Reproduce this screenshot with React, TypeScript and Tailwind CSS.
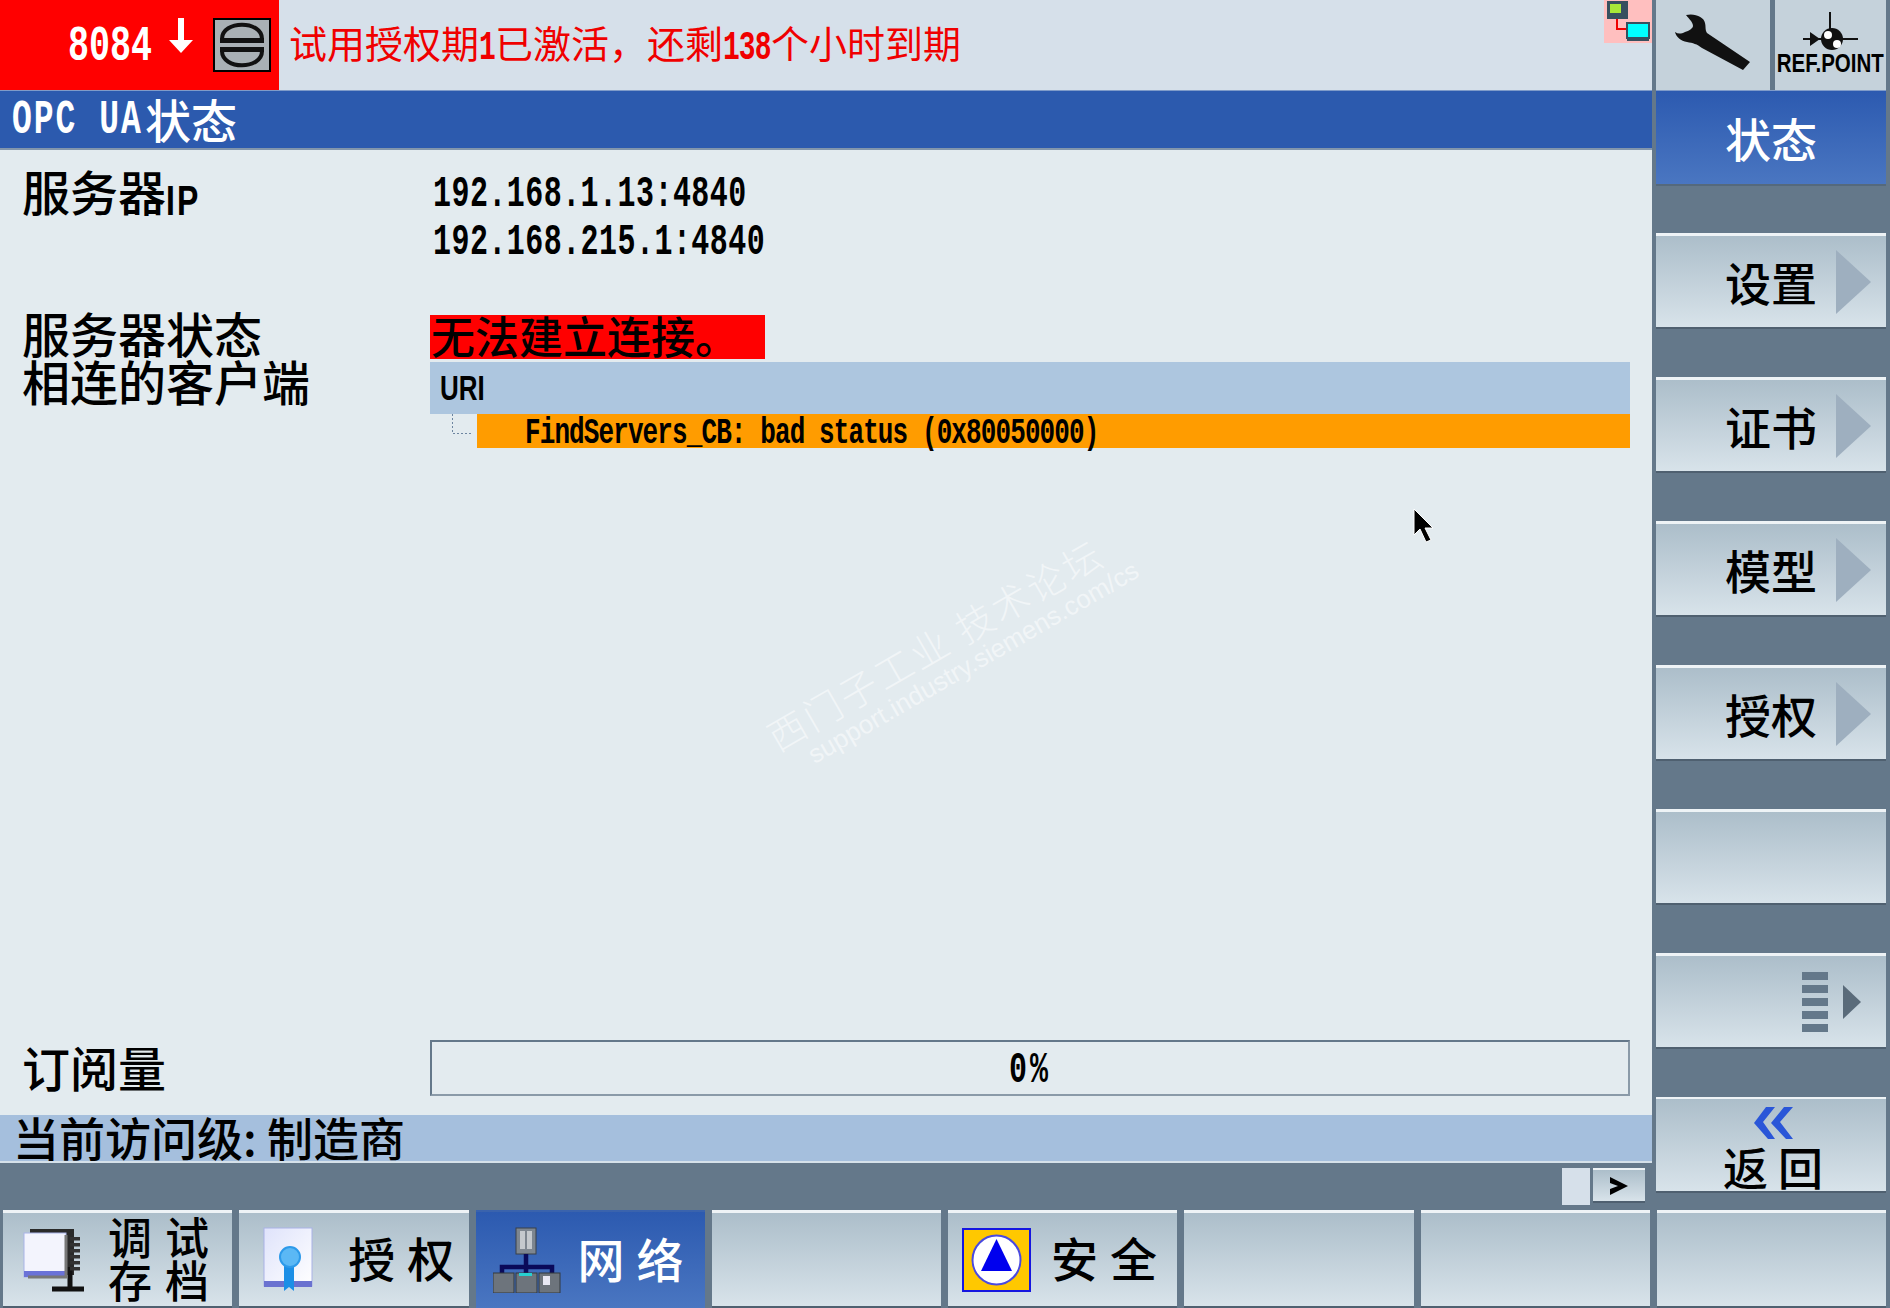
const cjk = "font-['Noto_Sans_CJK_SC','Liberation_Sans',sans-serif]";

// tall narrow digits of the HMI font
function Mono({ children, className = "" }: { children: React.ReactNode; className?: string }) {
	return (
		<span className={`inline-block origin-center scale-y-[1.45] font-['Liberation_Mono',monospace] font-bold ${className}`}>
			{children}
		</span>
	);
}

function Narrow({ children, className = "" }: { children: React.ReactNode; className?: string }) {
	return (
		<span className={`inline-block origin-center scale-y-[1.35] font-['Liberation_Sans',sans-serif] font-bold ${className}`}>
			{children}
		</span>
	);
}

function SideButton({ label, arrow = true }: { label?: string; arrow?: boolean }) {
	return (
		<div className="flex h-[96px] w-[230px] items-center border-t-[3px] border-b-[2px] border-t-[#eef3f6] border-b-[#4f6070] bg-gradient-to-b from-[#acbeca] to-[#d8e3ea] pl-[69px]">
			<span className={`${cjk} mb-[2px] w-[111px] text-[46px] leading-none font-medium whitespace-nowrap text-black`}>{label}</span>
			{arrow && (
				<svg width="36" height="64" viewBox="0 0 36 64">
					<path d="M0 0 L35 32 L0 64 Z" fill="#9eafbf" />
				</svg>
			)}
		</div>
	);
}

function NavButton({ active, children }: { active?: boolean; children?: React.ReactNode }) {
	return (
		<div
			className={
				active
					? "flex h-[98px] items-center border-t-[2px] border-[#3a63ad] bg-gradient-to-b from-[#2c5ab0] to-[#4a76c1]"
					: "flex h-[98px] items-center border-t-[3px] border-b-[2px] border-t-[#eef3f6] border-b-[#4f6070] bg-gradient-to-b from-[#acbeca] to-[#d8e3ea]"
			}
		>
			{children}
		</div>
	);
}

function NotebookIcon() {
	return (
		<svg width="62" height="66" viewBox="0 0 62 66" className="ml-[19px] shrink-0">
			<path d="M8 2 H52 V48 H8 Z" fill="#2a2a2a" />
			<path d="M30 62 H64 M48 40 V62" stroke="#111" strokeWidth="5" fill="none" />
			{[10, 16, 22, 28, 34, 40].map((y) => (
				<rect key={y} x="48" y={y} width="10" height="3.5" fill="#333" />
			))}
			<rect x="2" y="6" width="42" height="44" fill="#f3f4fd" stroke="#aab4e8" />
			<rect x="2" y="44" width="42" height="6" fill="#6a72d8" />
			<path d="M44 8 V50 H6" stroke="#777" strokeWidth="3" fill="none" />
		</svg>
	);
}

function CertIcon() {
	return (
		<svg width="52" height="66" viewBox="0 0 52 66" className="ml-[24px] shrink-0">
			<defs>
				<linearGradient id="paper" x1="0" y1="0" x2="1" y2="1">
					<stop offset="0" stopColor="#dfe3fb" />
					<stop offset="1" stopColor="#ffffff" />
				</linearGradient>
			</defs>
			<rect x="1" y="1" width="48" height="58" fill="url(#paper)" stroke="#a9b2e6" />
			<rect x="1" y="54" width="48" height="6" fill="#6a72d0" />
			<path d="M21 36 H31 V64 L26 60 L21 64 Z" fill="#1c8fe6" />
			<circle cx="27" cy="30" r="10" fill="#5bb8f5" stroke="#2d9aea" strokeWidth="2" />
		</svg>
	);
}

function NetworkIcon() {
	return (
		<svg width="68" height="66" viewBox="0 0 68 66" className="ml-[17px] shrink-0">
			<rect x="23" y="1" width="20" height="26" fill="#7d8690" stroke="#3a4048" />
			<rect x="27" y="4" width="5" height="18" fill="#c4c9ce" />
			<rect x="34" y="4" width="5" height="18" fill="#c4c9ce" />
			<path d="M33 27 V40 M9 46 V40 H59 V46 M33 40 V46" stroke="#0a0a5a" strokeWidth="4.5" fill="none" />
			{[0, 23, 46].map((x) => (
				<rect key={x} x={x} y="46" width="21" height="20" fill="#6d747c" stroke="#33383e" />
			))}
			<rect x="26" y="46" width="13" height="3" fill="#28d0d0" />
			<rect x="50" y="49" width="7" height="9" fill="#e8e8f4" />
		</svg>
	);
}

function SafetyIcon() {
	return (
		<svg width="69" height="64" viewBox="0 0 69 64" className="ml-[14px] shrink-0">
			<rect x="1" y="1" width="67" height="62" fill="#ffc800" stroke="#1616e0" strokeWidth="2" />
			<ellipse cx="34.5" cy="32" rx="24" ry="24.5" fill="#fff" stroke="#4a4ae0" strokeWidth="2" />
			<path d="M34.5 11 L50 43 H19 Z" fill="#0000ee" />
		</svg>
	);
}

export default function App() {
	return (
		<div className={`flex h-[1308px] w-[1890px] flex-col overflow-hidden bg-[#64788a] ${cjk}`}>
			<div className="flex h-[1210px]">
				{/* left pane */}
				<div className="flex w-[1652px] flex-col">
					<div className="flex h-[90px] items-center bg-[#d6e0ea]">
						<div className="flex h-[90px] w-[279px] shrink-0 items-center bg-[#ff0000]">
							<Mono className="mt-[5px] ml-[68px] w-[84px] text-[35px] leading-none text-white">8084</Mono>
							<svg width="26" height="36" viewBox="0 0 26 36" className="mt-[-18px] ml-[16px]">
								<path d="M10 0 H16 V22 H25 L13 35 L1 22 H10 Z" fill="#fff" />
							</svg>
							<div className="ml-[19px] flex h-[54px] w-[58px] items-center justify-center border-[2px] border-black bg-[#a9b0b5]">
								<svg width="46" height="48" viewBox="0 0 46 48">
									<path d="M3 18 C3 -1 43 -1 43 18 M3 30 C3 49 43 49 43 30" fill="none" stroke="#111" strokeWidth="4" />
									<rect x="1" y="17" width="44" height="5" fill="#111" />
									<rect x="1" y="26" width="44" height="5" fill="#111" />
								</svg>
							</div>
						</div>
						<span className="mb-[2px] ml-[10px] w-[690px] text-[38px] leading-none whitespace-nowrap text-[#f00000]">
							试用授权期<Mono className="w-[16px] -translate-y-[2px] text-[28px] leading-none tracking-[-1px]">1</Mono>已激活，还剩<Mono className="w-[48px] -translate-y-[2px] text-[28px] leading-none tracking-[-1px]">138</Mono>个小时到期
						</span>
						<div className="mt-[-47px] ml-auto h-[43px] w-[48px]">
							<svg width="48" height="43" viewBox="0 0 48 43">
								<rect width="48" height="43" fill="#ffbfbf" />
								<rect x="3" y="1" width="21" height="18" fill="#37505f" />
								<rect x="6" y="4" width="11" height="9" fill="#a8e838" />
								<path d="M13 19 V29 H23" stroke="#f00000" strokeWidth="2" fill="none" />
								<rect x="23" y="23" width="22" height="15" fill="#00ffff" stroke="#37505f" strokeWidth="2" />
								<rect x="23" y="37" width="22" height="4" fill="#37505f" />
							</svg>
						</div>
					</div>
					<div className="flex h-[60px] items-center border-t border-b-[2px] border-t-[#7f9bc9] border-b-[#8296ac] bg-[#2c5aae] pb-[3px] pl-[12px] text-[46px] leading-none text-white">
						<Mono className="mt-[5px] w-[133px] text-[33px] leading-none tracking-[2px] whitespace-nowrap">OPC UA</Mono>
						<span className="font-medium">状态</span>
					</div>

					<div className="relative flex flex-1 flex-col bg-[#e3ebef] px-[22px] text-[48px] leading-none text-black">
						<div className="mt-[19px] flex h-[48px] items-center">
							<span className="mb-[4px] w-[408px] font-medium">服务器<Narrow className="w-[36px] text-[32px] tracking-[2px]">IP</Narrow></span>
							<Mono className="mt-[2px] ml-[3px] text-[30px] tracking-[0.45px]">192.168.1.13:4840</Mono>
						</div>
						<div className="flex h-[48px] items-center">
							<Mono className="mt-[2px] ml-[411px] text-[30px] tracking-[0.45px]">192.168.215.1:4840</Mono>
						</div>
						<div className="mt-[48px] flex h-[48px] items-center">
							<span className="mb-[10px] w-[408px] font-medium">服务器状态</span>
							<div className="flex h-[44px] w-[335px] items-center bg-[#ff0000] pb-[4px] pl-[1px] text-[44px] font-medium whitespace-nowrap">无法建立连接。</div>
						</div>
						<div className="flex items-start">
							<span className="-mt-[5px] w-[408px] font-medium">相连的客户端</span>
							<div className="mt-[1px] w-[1200px]">
								<div className="flex h-[52px] items-center bg-[#adc6df] pl-[10px]">
									<Narrow className="text-[26px]">URI</Narrow>
								</div>
								<div className="flex h-[34px]">
									<svg width="47" height="34" viewBox="0 0 47 34">
										<path d="M22.5 0 V19.5 H43" stroke="#6d85a0" strokeDasharray="2 2" fill="none" />
									</svg>
									<div className="flex flex-1 items-center bg-[#ff9c00] pt-[3px] pl-[48px]">
										<Mono className="text-[26px] tracking-[-0.9px] whitespace-nowrap">FindServers_CB: bad status (0x80050000)</Mono>
									</div>
								</div>
							</div>
						</div>

						<div className="mt-auto mb-[19px] flex h-[56px] items-center">
							<span className="mb-[5px] w-[408px] font-medium">订阅量</span>
							<div className="flex h-[56px] w-[1200px] items-center justify-center border-[2px] border-t-[#64788a] border-r-[#8a9aa8] border-b-[#8a9aa8] border-l-[#64788a] pt-[3px]">
								<Mono className="text-[30px] tracking-[3px]">0%</Mono>
							</div>
						</div>

						{/* forum watermark */}
						<div className="absolute top-[465px] left-[750px] flex rotate-[-30deg] flex-col items-center whitespace-nowrap text-white/50">
							<span className="mr-[24px] text-[38px] leading-[42px] font-light tracking-[3px]">西门子工业 技术论坛</span>
							<span className="ml-[24px] font-['Liberation_Sans',sans-serif] text-[26px] leading-[28px]">support.industry.siemens.com/cs</span>
						</div>

						{/* mouse pointer */}
						<svg width="24" height="36" viewBox="0 0 24 36" className="absolute top-[358px] left-[1413px]">
							<path d="M1 1 V27 L7 21 L13 34 L18 32 L12 20 H20 Z" fill="#000" stroke="#fff" strokeWidth="1" />
						</svg>
					</div>

					<div className="flex h-[48px] items-center border-b-[2px] border-b-[#d5e1ea] bg-[#a5bfdd] pb-[4px] pl-[13px] text-[46px] leading-none font-medium whitespace-nowrap text-black">
						当前访问级: 制造商
					</div>
					<div className="flex h-[47px] items-start justify-end pt-[5px] pr-[7px]">
						<div className="h-[37px] w-[28px] bg-[#d6e0ea]" />
						<div className="ml-[3px] flex h-[35px] w-[52px] items-center justify-center border-t-[2px] border-b-[2px] border-t-[#eef3f6] border-b-[#4f6070] bg-gradient-to-b from-[#acbeca] to-[#d8e3ea]">
							<svg width="22" height="20" viewBox="0 0 22 20">
								<path d="M2 1 L20 10 L2 19 V13 L10 10 L2 7 Z" fill="#000" />
							</svg>
						</div>
					</div>
				</div>

				{/* right soft keys */}
				<div className="ml-[4px] flex w-[230px] flex-col">
					<div className="flex h-[90px] gap-[5px] bg-[#64788a]">
						<div className="flex h-[90px] w-[114px] items-center justify-center bg-[#c5d2db]">
							<svg width="76" height="57" viewBox="0 0 76 57" className="mb-[6px]">
								<path d="M11 1 C20 -1 29 3 30 9 C31 13 30 16 32 19 L75 48 L68 56 L27 34 C22 30 18 29 12 28 C6 27 1 23 0 18 C3 20 6 20 10 18 C14 17 18 14 18 12 C18 8 14 5 11 1 Z" fill="#111" />
							</svg>
						</div>
						<div className="flex h-[90px] w-[112px] flex-col items-center bg-[#c5d2db]">
							<svg width="60" height="42" viewBox="0 0 60 42" className="mt-[12px]">
								<path d="M30 0 V26 M3 27 H58" stroke="#111" strokeWidth="2" />
								<path d="M10 20 L20 27 L10 34 Z" fill="#111" />
								<circle cx="32" cy="27" r="11" fill="#111" />
								<circle cx="28" cy="23" r="4" fill="#fff" />
								<circle cx="37" cy="32" r="4" fill="#fff" />
							</svg>
							<span className="mt-[-1px] scale-y-[1.25] font-['Liberation_Sans',sans-serif] text-[20.5px] leading-none font-bold whitespace-nowrap text-black">REF.POINT</span>
						</div>
					</div>
					<div className="flex h-[96px] items-center border-t border-b-[2px] border-t-[#7f9bc9] border-b-[#55697c] bg-gradient-to-b from-[#2c5ab0] to-[#4a76c1] pb-[2px] pl-[69px] text-[46px] leading-none font-medium text-white">
						状态
					</div>
					<div className="mt-[47px] flex flex-col gap-[48px]">
						<SideButton label="设置" />
						<SideButton label="证书" />
						<SideButton label="模型" />
						<SideButton label="授权" />
						<SideButton arrow={false} />
						<div className="flex h-[96px] items-center justify-end border-t-[3px] border-b-[2px] border-t-[#eef3f6] border-b-[#4f6070] bg-gradient-to-b from-[#acbeca] to-[#d8e3ea] pr-[25px]">
							<svg width="26" height="60" viewBox="0 0 26 60">
								{[0, 13, 26, 39, 52].map((y) => (
									<rect key={y} x="0" y={y} width="26" height="8" fill="#64788a" />
								))}
							</svg>
							<svg width="18" height="34" viewBox="0 0 18 34" className="ml-[15px]">
								<path d="M0 0 L18 17 L0 34 Z" fill="#5a6b7a" />
							</svg>
						</div>
						<div className="flex h-[96px] flex-col items-center border-t-[2px] border-b-[2px] border-t-[#eef3f6] border-b-[#4f6070] bg-gradient-to-b from-[#acbeca] to-[#d8e3ea]">
							<svg width="40" height="32" viewBox="0 0 40 32" className="mt-[8px] ml-[6px] shrink-0">
								<path d="M12 0 H21 L9 15 L21 32 H14 L0 16 Z M30 0 H39 L26 15 L39 32 H32 L17 16 Z" fill="#2a56d8" />
							</svg>
							<span className="mt-[5px] pl-[14px] text-[45px] leading-[46px] font-medium tracking-[10px] whitespace-nowrap text-black">返回</span>
						</div>
					</div>
				</div>
			</div>

			{/* bottom soft keys */}
			<div className="grid grid-cols-8 gap-[7px] pr-[4px] pl-[3px]">
				<NavButton>
					<NotebookIcon />
					<span className="mb-[3px] ml-[24px] flex flex-col text-[44px] leading-[43px] font-medium tracking-[13px] whitespace-nowrap text-black">
						<span>调试</span>
						<span>存档</span>
					</span>
				</NavButton>
				<NavButton>
					<CertIcon />
					<span className="mb-[6px] ml-[33px] text-[47px] leading-none font-medium tracking-[12px] whitespace-nowrap text-black">授权</span>
				</NavButton>
				<NavButton active>
					<NetworkIcon />
					<span className="mb-[6px] ml-[17px] text-[47px] leading-none font-medium tracking-[12px] whitespace-nowrap text-white">网络</span>
				</NavButton>
				<NavButton />
				<NavButton>
					<SafetyIcon />
					<span className="mb-[6px] ml-[20px] text-[47px] leading-none font-medium tracking-[12px] whitespace-nowrap text-black">安全</span>
				</NavButton>
				<NavButton />
				<NavButton />
				<NavButton />
			</div>
		</div>
	);
}
